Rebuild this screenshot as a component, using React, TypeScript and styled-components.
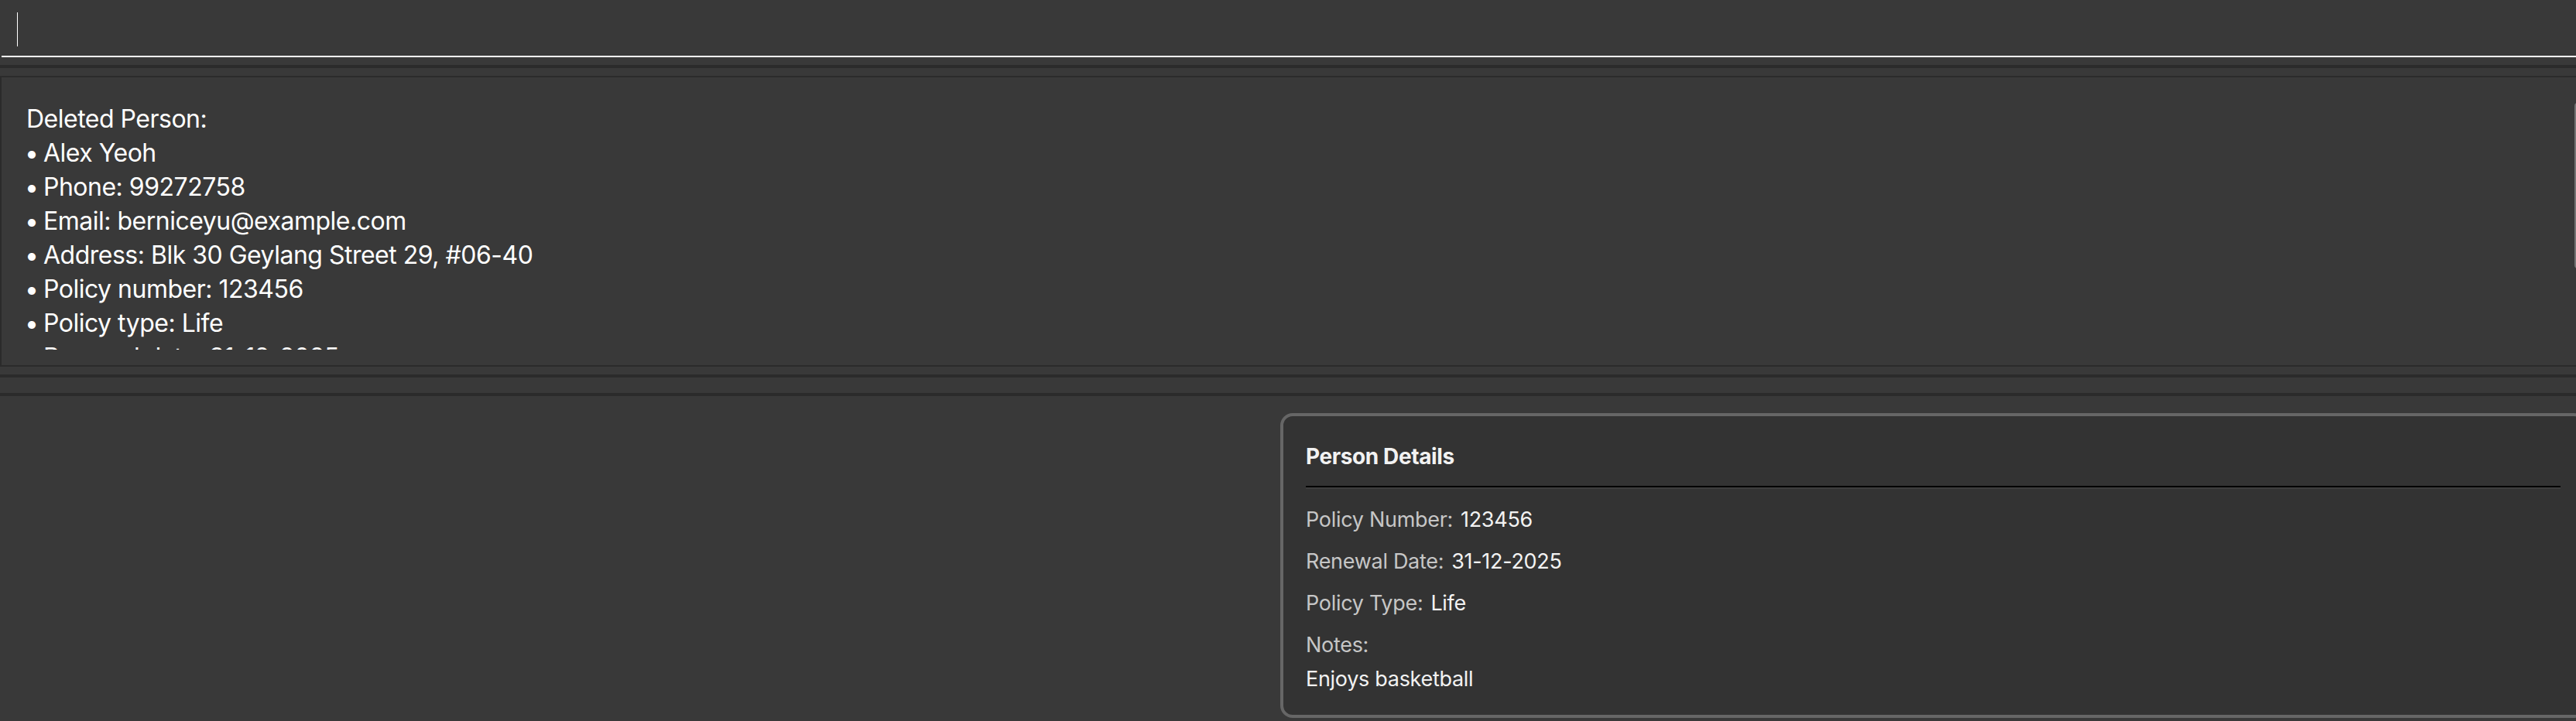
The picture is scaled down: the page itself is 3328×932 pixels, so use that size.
import styled, { createGlobalStyle } from 'styled-components';

const GlobalStyle = createGlobalStyle`
  html, body {
    margin: 0;
    padding: 0;
    background: #393939;
    overflow: hidden;
  }
  body {
    font-family: Inter, "Noto Sans", sans-serif;
    color: #ffffff;
  }
`;

const deletedPerson = [
  'Alex Yeoh',
  'Phone: 99272758',
  'Email: berniceyu@example.com',
  'Address: Blk 30 Geylang Street 29, #06-40',
  'Policy number: 123456',
  'Policy type: Life',
  'Renewal date: 31-12-2025',
  'Note: Enjoys basketball',
];

const details = [
  { label: 'Policy Number:', value: '123456' },
  { label: 'Renewal Date:', value: '31-12-2025' },
  { label: 'Policy Type:', value: 'Life' },
];

function App() {
  return (
    <>
      <GlobalStyle />
      <Window>
        <CommandBar>
          <CommandField>
            <Caret />
          </CommandField>
        </CommandBar>

        <Divider $gap={10} />

        <ResultPane>
          <ResultText>
            <ResultLine>Deleted Person:</ResultLine>
            {deletedPerson.map((line) => (
              <ResultLine key={line}>
                <Bullet>•</Bullet>
                {line}
              </ResultLine>
            ))}
          </ResultText>
          <ScrollThumb />
        </ResultPane>

        <Divider $gap={10} />
        <Divider $gap={20} />

        <LowerSplit>
          <PersonList />
          <DetailsPane>
            <DetailsCard>
              <CardTitle>Person Details</CardTitle>
              <CardRule />
              {details.map((d) => (
                <DetailRow key={d.label}>
                  <DetailLabel>{d.label}</DetailLabel>
                  <DetailValue>{d.value}</DetailValue>
                </DetailRow>
              ))}
              <DetailRow>
                <DetailLabel>Notes:</DetailLabel>
              </DetailRow>
              <NotesText>Enjoys basketball</NotesText>
            </DetailsCard>
          </DetailsPane>
        </LowerSplit>
      </Window>
    </>
  );
}

export default App;

const Window = styled.div`
  width: 3328px;
  height: 932px;
  display: flex;
  flex-direction: column;
  background: #393939;
  overflow: hidden;
`;

const CommandBar = styled.div`
  height: 74px;
  padding-left: 2px;
  box-sizing: border-box;
`;

const CommandField = styled.div`
  height: 74px;
  box-sizing: border-box;
  border-bottom: 2px solid #ffffff;
  padding: 16px 0 0 20px;
`;

const Caret = styled.div`
  width: 1px;
  height: 44px;
  background: #ffffff;
`;

const Divider = styled.div<{ $gap: number }>`
  flex-shrink: 0;
  margin-top: ${(p) => p.$gap}px;
  height: 4px;
  background: #2b2b2b;
`;

const ResultPane = styled.div`
  position: relative;
  flex-shrink: 0;
  margin-top: 10px;
  height: 376px;
  box-sizing: border-box;
  border-top: 2px solid #2b2b2b;
  border-bottom: 2px solid #2b2b2b;
  border-left: 2px solid #2b2b2b;
  padding: 32px 0 20px 30px;
`;

const ResultText = styled.div`
  height: 100%;
  overflow: hidden;
  padding-left: 2px;
  font-size: 32px;
  line-height: 44px;
  letter-spacing: -0.5px;
  color: #ffffff;
`;

const ResultLine = styled.div`
  height: 44px;
  white-space: pre;
`;

const Bullet = styled.span`
  display: inline-block;
  width: 24px;
  margin-left: -2px;
`;

const ScrollThumb = styled.div`
  position: absolute;
  right: -6px;
  top: 33px;
  width: 8px;
  height: 214px;
  border-radius: 4px;
  background: #747474;
`;

const LowerSplit = styled.div`
  flex: 1;
  display: grid;
  grid-template-columns: 1654px 1fr;
  min-height: 0;
`;

const PersonList = styled.div`
  background: #393939;
`;

const DetailsPane = styled.div`
  padding-top: 22px;
  margin-right: -13px;
`;

const DetailsCard = styled.div`
  height: 394px;
  box-sizing: border-box;
  border: 4px solid #666666;
  border-radius: 16px;
  background: #333333;
  padding: 35px 29px 0 29px;
`;

const CardTitle = styled.div`
  font-size: 28px;
  line-height: 34px;
  font-weight: 700;
  letter-spacing: -0.4px;
  color: #f2f2f2;
`;

const CardRule = styled.div`
  margin-top: 21px;
  height: 2px;
  background: #000000;
  border-bottom: 2px solid #3e3e3e;
  margin-bottom: 13px;
`;

const DetailRow = styled.div`
  display: flex;
  gap: 10px;
  font-size: 27px;
  line-height: 54px;
  letter-spacing: -0.3px;
`;

const DetailLabel = styled.span`
  color: #c6c6c6;
`;

const DetailValue = styled.span`
  color: #f2f2f2;
`;

const NotesText = styled.div`
  font-size: 27px;
  line-height: 34px;
  letter-spacing: -0.3px;
  color: #f2f2f2;
`;
